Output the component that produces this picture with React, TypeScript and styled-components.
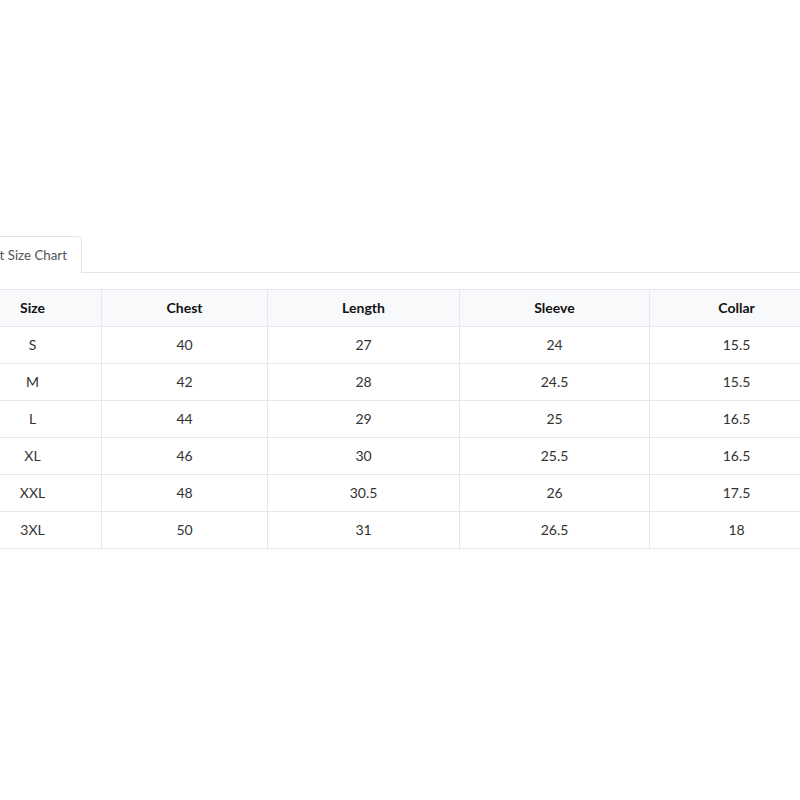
import React from "react";
import styled, { createGlobalStyle } from "styled-components";

const GlobalStyle = createGlobalStyle`
  html, body {
    margin: 0;
    padding: 0;
    background: #ffffff;
    overflow: hidden;
  }
  body {
    font-family: "Lato", "Open Sans", sans-serif;
  }
`;

const Page = styled.div`
  width: 860px;
  margin-left: -37px;
  padding-top: 236px;
`;

const TabBar = styled.div`
  display: flex;
  border-bottom: 1px solid #e3e3e3;
`;

const Tab = styled.div`
  box-sizing: border-box;
  height: 37px;
  margin-left: -1px;
  margin-bottom: -1px;
  padding: 8px 14px 0 14px;
  font-size: 13.3px;
  line-height: 20px;
  color: #555555;
  background: #ffffff;
  border: 1px solid #e3e3e3;
  border-bottom: none;
  border-radius: 5px 5px 0 0;
  white-space: nowrap;
`;

const Table = styled.table`
  margin-top: 16px;
  width: 860px;
  border-collapse: collapse;
  table-layout: fixed;
  border: 1px solid #e6e7ec;
`;

const HeadCell = styled.th`
  box-sizing: border-box;
  height: 37px;
  padding: 0 0 2px 0;
  background: #f8f9fb;
  font-size: 14px;
  font-weight: 700;
  color: #111111;
  text-align: center;
  border: 1px solid #e6e7ec;
`;

const Cell = styled.td`
  box-sizing: border-box;
  height: 37px;
  padding: 0 0 1px 0;
  font-size: 14px;
  color: #333333;
  text-align: center;
  border: 1px solid #e6e7ec;
`;

const widths = [138, 166, 192, 190, 174];
const headers = ["Size", "Chest", "Length", "Sleeve", "Collar"];
const rows = [
  ["S", "40", "27", "24", "15.5"],
  ["M", "42", "28", "24.5", "15.5"],
  ["L", "44", "29", "25", "16.5"],
  ["XL", "46", "30", "25.5", "16.5"],
  ["XXL", "48", "30.5", "26", "17.5"],
  ["3XL", "50", "31", "26.5", "18"],
];

export default function App() {
  return (
    <>
      <GlobalStyle />
      <Page>
        <TabBar>
          <Tab>Shirt Size Chart</Tab>
        </TabBar>
        <Table>
          <colgroup>
            {widths.map((w, i) => (
              <col key={i} style={{ width: w }} />
            ))}
          </colgroup>
          <thead>
            <tr>
              {headers.map((h) => (
                <HeadCell key={h}>{h}</HeadCell>
              ))}
            </tr>
          </thead>
          <tbody>
            {rows.map((r) => (
              <tr key={r[0]}>
                {r.map((c, i) => (
                  <Cell key={i}>{c}</Cell>
                ))}
              </tr>
            ))}
          </tbody>
        </Table>
      </Page>
    </>
  );
}
